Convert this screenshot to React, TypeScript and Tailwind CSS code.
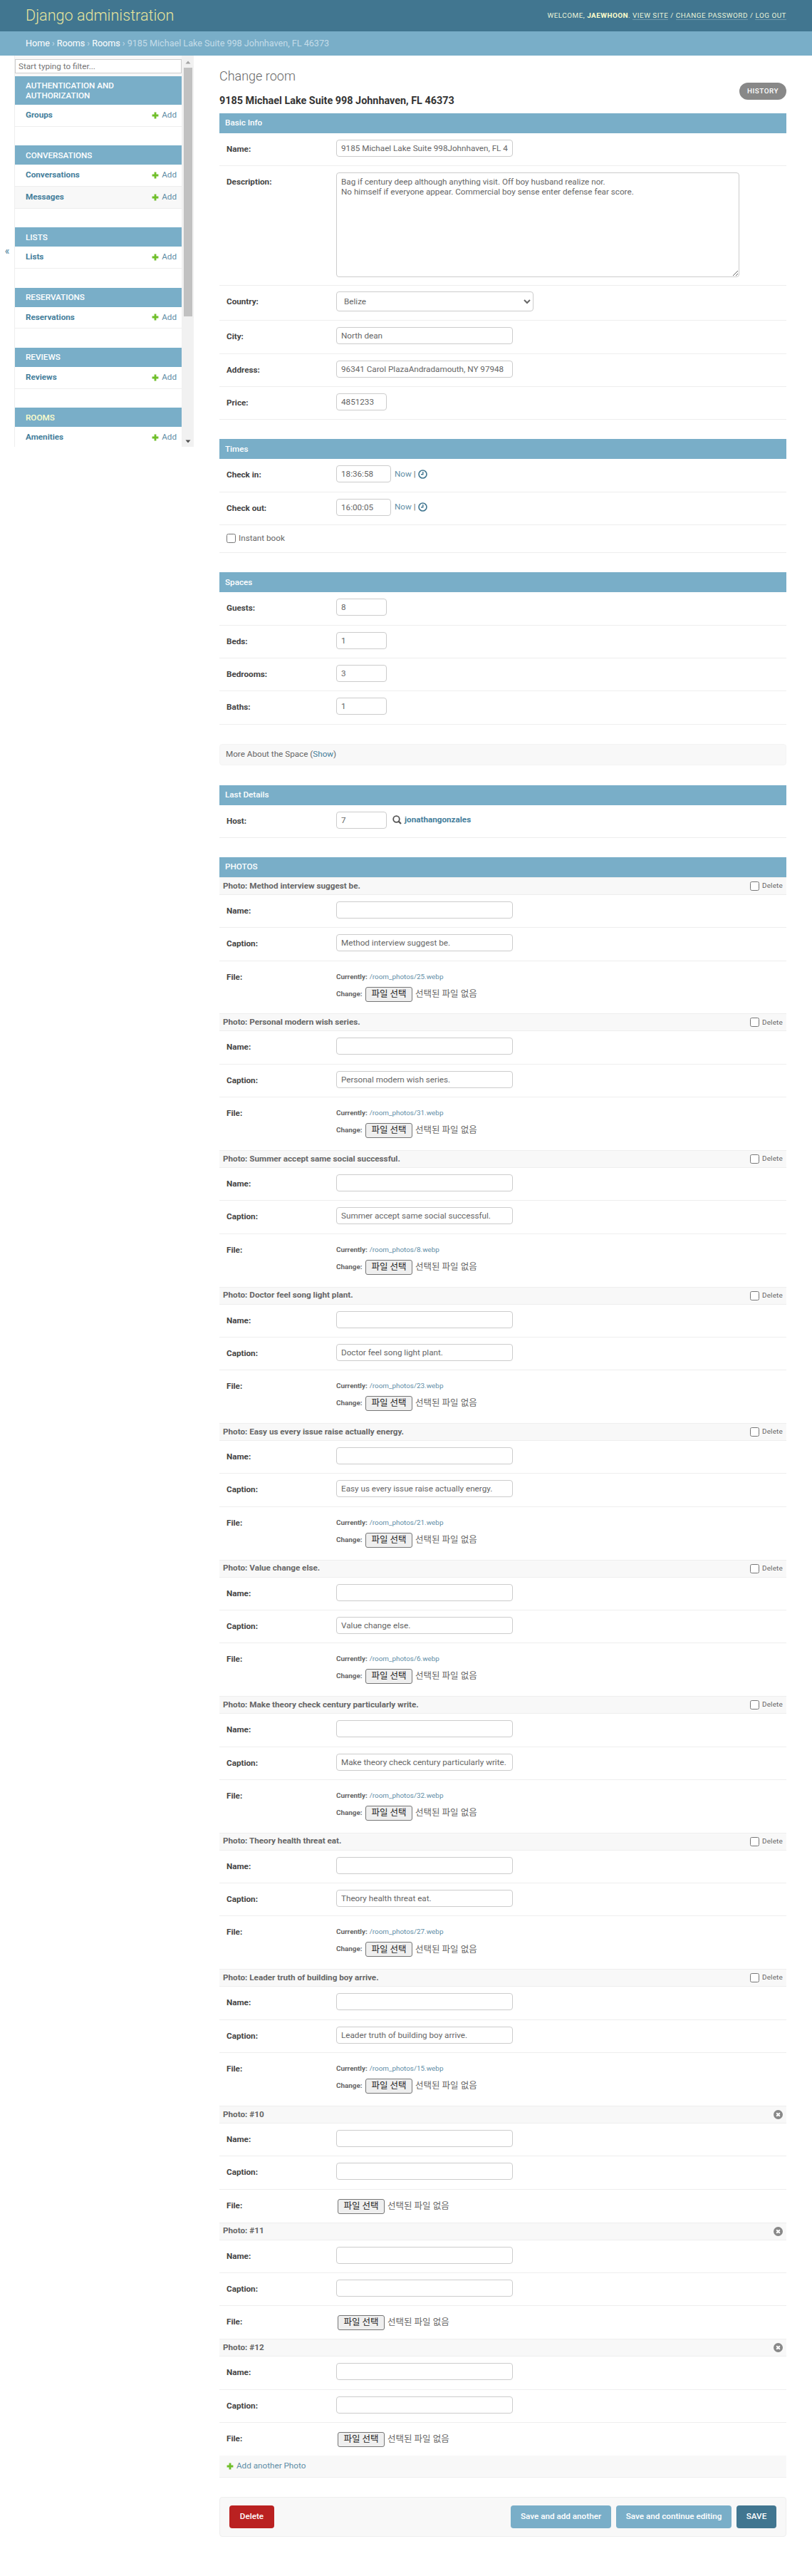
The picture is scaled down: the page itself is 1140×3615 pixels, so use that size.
import React from "react";

const PHOTOS: [string, string][] = [
  ["Method interview suggest be.", "25"],
  ["Personal modern wish series.", "31"],
  ["Summer accept same social successful.", "8"],
  ["Doctor feel song light plant.", "23"],
  ["Easy us every issue raise actually energy.", "21"],
  ["Value change else.", "6"],
  ["Make theory check century particularly write.", "32"],
  ["Theory health threat eat.", "27"],
  ["Leader truth of building boy arrive.", "15"],
];

const inputCls =
  "block h-[24px] rounded-[4px] border border-[#ccc] bg-white px-[6px] text-[11.7px] leading-[15px] text-[#666] outline-none";

function Plus() {
  return (
    <svg width="10" height="10" viewBox="0 0 10 10" className="shrink-0">
      <path d="M3.6 0.6h2.8v3h3v2.8h-3v3H3.6v-3h-3V3.6h3z" fill="#70bf2b" />
    </svg>
  );
}

function Label({ children }: { children: React.ReactNode }) {
  return <div className="mt-[6px] w-[154px] shrink-0 text-[11.7px] font-bold leading-[15px] text-[#444]">{children}</div>;
}

function Row({ label, h = "h-[46.33px]", children }: { label: string; h?: string; children: React.ReactNode }) {
  return (
    <div className={`flex items-start border-b border-[#eee] pl-[10px] pt-[9px] ${h}`}>
      <Label>{label}</Label>
      {children}
    </div>
  );
}

function Head({ children }: { children: React.ReactNode }) {
  return <div className="flex h-[28px] items-center bg-[#79aec8] pl-[8px] text-[11.7px] font-medium text-white">{children}</div>;
}

function FileButton() {
  return (
    <span className="flex h-[21px] items-center">
      <span className="flex h-[21px] w-[66px] items-center justify-center rounded-[3px] border border-[#767676] bg-[#efefef] text-[12.5px] text-[#222]">
        파일 선택
      </span>
      <span className="ml-[4px] text-[12.5px] text-[#666]">선택된 파일 없음</span>
    </span>
  );
}

function SideRow({ name, alt }: { name: string; alt?: boolean }) {
  return (
    <div className={`flex h-[30.67px] items-center justify-between border-b border-[#eee] pl-[15px] pr-[7px] text-[11.7px] ${alt ? "bg-[#f8f8f8]" : "bg-white"}`}>
      <span className="font-bold text-[#447e9b]">{name}</span>
      <span className="flex items-center gap-[4px] text-[#5f8ea6]">
        <Plus />
        Add
      </span>
    </div>
  );
}

function Cap({ children, two, active }: { children: React.ReactNode; two?: boolean; active?: boolean }) {
  return (
    <div
      className={`flex items-center bg-[#79aec8] px-[15px] text-[11.7px] font-medium uppercase leading-[14px] ${two ? "h-[40px]" : "h-[27px]"} ${active ? "text-[#ffc]" : "text-white"}`}
    >
      <span>{children}</span>
    </div>
  );
}

function Group({ children, last }: { children: React.ReactNode; last?: boolean }) {
  return <div className={last ? "" : "mb-[26.67px]"}>{children}</div>;
}

function Sidebar() {
  return (
    <div className="flex h-[549px] w-[272px] shrink-0">
      <div className="flex w-[20px] shrink-0 items-center justify-center text-[14px] text-[#447e9b]">
        <span>«</span>
      </div>
      <div className="h-full w-[235px] shrink-0 overflow-hidden border-l border-[#eee]">
        <div className="bg-[#f8f8f8] pt-[5px] pb-[4px]">
          <input
            className="block h-[20px] w-[234px] border border-[#ccc] bg-white px-[4px] text-[11.7px] text-[#555] outline-none placeholder:text-[#757575]"
            placeholder="Start typing to filter..."
          />
        </div>
        <Group>
          <Cap two>Authentication and Authorization</Cap>
          <SideRow name="Groups" />
        </Group>
        <Group>
          <Cap>Conversations</Cap>
          <SideRow name="Conversations" />
          <SideRow name="Messages" alt />
        </Group>
        <Group>
          <Cap>Lists</Cap>
          <SideRow name="Lists" />
        </Group>
        <Group>
          <Cap>Reservations</Cap>
          <SideRow name="Reservations" />
        </Group>
        <Group>
          <Cap>Reviews</Cap>
          <SideRow name="Reviews" />
        </Group>
        <Group last>
          <Cap active>Rooms</Cap>
          <SideRow name="Amenities" />
        </Group>
      </div>
      <div className="flex h-full w-[17px] shrink-0 flex-col items-center bg-[#f1f1f1]">
        <svg width="8" height="5" viewBox="0 0 8 5" className="mt-[7px]"><path d="M4 0.5 7.5 4.5H0.5z" fill="#a3a3a3" /></svg>
        <div className="mt-[5px] h-[349px] w-[12px] bg-[#c1c1c1]" />
        <svg width="8" height="5" viewBox="0 0 8 5" className="mt-[173px]"><path d="M4 4.5 0.5 0.5h7z" fill="#505050" /></svg>
      </div>
    </div>
  );
}

function Clock() {
  return (
    <svg width="13" height="13" viewBox="0 0 13 13" className="ml-[3px]">
      <circle cx="6.5" cy="6.5" r="5.5" fill="none" stroke="#417690" strokeWidth="1.6" />
      <path d="M6.8 3v3.8H4" fill="none" stroke="#417690" strokeWidth="1.4" />
    </svg>
  );
}

function TimeRow({ label, value }: { label: string; value: string }) {
  return (
    <Row label={label}>
      <input className={`${inputCls} w-[77px]`} defaultValue={value} />
      <span className="ml-[5px] flex h-[24px] items-center text-[11.7px] text-[#666]">
        <span className="text-[#5f8ea6]">Now</span>
        <span className="ml-[3px]">|</span>
        <Clock />
      </span>
    </Row>
  );
}

function NumRow({ label, value }: { label: string; value: string }) {
  return (
    <Row label={label}>
      <input className={`${inputCls} w-[71px]`} defaultValue={value} />
    </Row>
  );
}

function TextRow({ label, value = "" }: { label: string; value?: string }) {
  return (
    <Row label={label}>
      <input className={`${inputCls} w-[248px]`} defaultValue={value} />
    </Row>
  );
}

function PhotoHead({ title, extra }: { title: string; extra: React.ReactNode }) {
  return (
    <div className="flex h-[25px] items-center justify-between border-y border-[#eee] bg-[#f8f8f8] pl-[5px] pr-[5px] text-[11.7px]">
      <span className="font-bold text-[#666]">Photo: {title}</span>
      {extra}
    </div>
  );
}

function ExistingPhoto({ title, file }: { title: string; file: string }) {
  return (
    <div>
      <PhotoHead
        title={title}
        extra={
          <label className="flex items-center gap-[4px] text-[9.9px] tracking-[0.2px] text-[#666]">
            <input type="checkbox" className="m-0 h-[13px] w-[13px]" />
            Delete
          </label>
        }
      />
      <TextRow label="Name:" />
      <TextRow label="Caption:" value={title} />
      <div className="flex h-[73.9px] items-start pl-[10px] pt-[15px]">
        <div className="w-[154px] shrink-0 text-[11.7px] font-bold leading-[15px] text-[#444]">File:</div>
        <div className="text-[9.9px] text-[#666]">
          <div className="flex h-[15px] items-center">
            <b className="font-bold">Currently:</b>
            <span className="ml-[3px] text-[#5f8ea6]">/room_photos/{file}.webp</span>
          </div>
          <div className="mt-[6px] flex items-center">
            <b className="mr-[4px] w-[37px] font-bold">Change:</b>
            <FileButton />
          </div>
        </div>
      </div>
    </div>
  );
}

function NewPhoto({ n }: { n: number }) {
  return (
    <div>
      <PhotoHead
        title={`#${n}`}
        extra={
          <svg width="13" height="13" viewBox="0 0 13 13">
            <circle cx="6.5" cy="6.5" r="6.5" fill="#888" />
            <path d="M4.2 4.2l4.6 4.6M8.8 4.2 4.2 8.8" stroke="#fff" strokeWidth="2" />
          </svg>
        }
      />
      <TextRow label="Name:" />
      <TextRow label="Caption:" />
      <div className="flex h-[46px] items-start pl-[10px] pt-[13px]">
        <div className="mt-[2px] w-[156px] shrink-0 text-[11.7px] font-bold leading-[15px] text-[#444]">File:</div>
        <FileButton />
      </div>
    </div>
  );
}

export default function App() {
  return (
    <div className="min-h-[3615px] bg-white font-['Roboto','Noto_Sans_CJK_KR',sans-serif] text-[11.7px] text-[#333]">
      <header className="flex h-[44px] items-center justify-between bg-[#417690] pl-[36px] pr-[36px]">
        <div className="text-[21.6px] font-light text-[#e6e49c]">Django administration</div>
        <div className="text-[9.9px] uppercase tracking-[0.5px] text-[#e9f3d8]">
          Welcome, <b className="font-bold text-[#ffc]">jaewhoon</b>.{" "}
          <span className="border-b border-white/25">View site</span> /{" "}
          <span className="border-b border-white/25">Change password</span> /{" "}
          <span className="border-b border-white/25">Log out</span>
        </div>
      </header>
      <nav className="flex h-[34px] items-center bg-[#79aec8] pl-[36px] text-[12.6px] text-[#c4dce8]">
        <span className="text-white">Home</span>
        <span className="mx-[3px]">›</span>
        <span className="text-white">Rooms</span>
        <span className="mx-[3px]">›</span>
        <span className="text-white">Rooms</span>
        <span className="mx-[3px]">›</span>
        <span>9185 Michael Lake Suite 998 Johnhaven, FL 46373</span>
      </nav>
      <div className="flex">
        <Sidebar />
        <main className="ml-[36px] w-[796px]">
          <h1 className="mt-[17px] h-[24px] text-[18px] font-light leading-[24px] text-[#666]">Change room</h1>
          <div className="relative mt-[13px] mb-[8px] h-[19px]">
            <h2 className="text-[14.4px] font-bold leading-[19px] text-[#333]">9185 Michael Lake Suite 998 Johnhaven, FL 46373</h2>
            <span className="absolute -top-[16px] right-0 flex h-[24px] w-[66px] items-center justify-center rounded-full bg-[#888] text-[9.9px] font-medium uppercase tracking-[0.5px] text-white">
              History
            </span>
          </div>

          <section className="mb-[27px]">
            <Head>Basic Info</Head>
            <Row label="Name:">
              <input className={`${inputCls} w-[248px]`} defaultValue="9185 Michael Lake Suite 998Johnhaven, FL 46373" />
            </Row>
            <Row label="Description:" h="h-[168px]">
              <textarea
                className="block h-[147px] w-[566px] rounded-[4px] border border-[#ccc] bg-white px-[6px] py-[5px] text-[11.7px] leading-[14px] text-[#666] outline-none"
                defaultValue={"Bag if century deep although anything visit. Off boy husband realize nor.\nNo himself if everyone appear. Commercial boy sense enter defense fear score."}
              />
            </Row>
            <Row label="Country:" h="h-[49px]">
              <select className="-mt-[1px] block h-[28px] w-[277px] rounded-[4px] border border-[#ccc] bg-white px-[6px] text-[11.7px] text-[#666] outline-none" defaultValue="Belize">
                <option>Belize</option>
              </select>
            </Row>
            <TextRow label="City:" value="North dean" />
            <TextRow label="Address:" value="96341 Carol PlazaAndradamouth, NY 97948" />
            <NumRow label="Price:" value="4851233" />
          </section>

          <section className="mb-[27.33px]">
            <Head>Times</Head>
            <TimeRow label="Check in:" value="18:36:58" />
            <TimeRow label="Check out:" value="16:00:05" />
            <div className="flex h-[39px] items-center border-b border-[#eee] pl-[10px]">
              <label className="flex items-center gap-[4px] text-[11.7px] text-[#666]">
                <input type="checkbox" className="m-0 h-[13px] w-[13px]" />
                Instant book
              </label>
            </div>
          </section>

          <section className="mb-[27px]">
            <Head>Spaces</Head>
            <NumRow label="Guests:" value="8" />
            <NumRow label="Beds:" value="1" />
            <NumRow label="Bedrooms:" value="3" />
            <NumRow label="Baths:" value="1" />
          </section>

          <div className="mb-[28px] flex h-[30px] items-center rounded-[4px] border border-[#f4f4f4] bg-[#f8f8f8] pl-[8px] text-[11.7px] text-[#666]">
            More About the Space (<span className="text-[#447e9b]">Show</span>)
          </div>

          <section className="mb-[27px]">
            <Head>Last Details</Head>
            <Row label="Host:">
              <input className={`${inputCls} w-[71px]`} defaultValue="7" />
              <span className="ml-[8px] flex h-[24px] items-center">
                <svg width="13" height="13" viewBox="0 0 13 13">
                  <circle cx="5.5" cy="5.5" r="4.3" fill="none" stroke="#555" strokeWidth="1.8" />
                  <path d="M8.6 8.6 12 12" stroke="#555" strokeWidth="2.2" />
                </svg>
                <b className="ml-[4px] text-[11.7px] font-bold text-[#447e9b]">jonathangonzales</b>
              </span>
            </Row>
          </section>

          <section>
            <Head>PHOTOS</Head>
            {PHOTOS.map(([t, f]) => (
              <ExistingPhoto key={f} title={t} file={f} />
            ))}
            <NewPhoto n={10} />
            <NewPhoto n={11} />
            <NewPhoto n={12} />
            <div className="flex h-[31px] items-center gap-[4px] border-b border-[#eee] bg-[#f8f8f8] pl-[10px] text-[11.7px] text-[#5f8ea6]">
              <Plus />
              Add another Photo
            </div>
          </section>

          <div className="mt-[27px] flex h-[56px] items-center justify-between rounded-[4px] border border-[#eee] bg-[#f8f8f8] px-[13px] text-[11.7px] font-medium text-white">
            <span className="flex h-[32px] w-[63px] items-center justify-center rounded-[4px] bg-[#ba2121]">Delete</span>
            <div className="flex gap-[7px]">
              <span className="flex h-[32px] w-[141px] items-center justify-center rounded-[4px] bg-[#79aec8]">Save and add another</span>
              <span className="flex h-[32px] w-[162px] items-center justify-center rounded-[4px] bg-[#79aec8]">Save and continue editing</span>
              <span className="flex h-[32px] w-[56px] items-center justify-center rounded-[4px] bg-[#417690]">SAVE</span>
            </div>
          </div>
        </main>
      </div>
    </div>
  );
}
